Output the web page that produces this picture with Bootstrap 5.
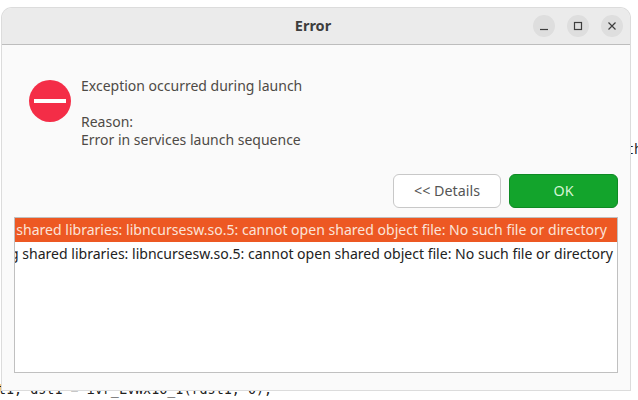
<!DOCTYPE html>
<html lang="en">
<head>
    <meta charset="UTF-8" />
    <title>Error</title>
    <link href="https://cdn.jsdelivr.net/npm/bootstrap@5.3.3/dist/css/bootstrap.min.css" rel="stylesheet">
    <style>
        body { background: #fff; font-family: "Noto Sans", "Liberation Sans", sans-serif; overflow: hidden; }
        .term-text { position: absolute; left: 0; top: 0; width: 638px; height: 400px; margin: 0; overflow: hidden; font: 13.4px/18px "DejaVu Sans Mono", monospace; color: #222; }
        .term-line { position: absolute; white-space: nowrap; }
        .term-bottom { left: -2px; top: 381px; }
        .term-right { left: 626px; top: 141px; }
        .term-left { left: -6px; color: #a85a10; }
        .err-window { position: absolute; left: 2px; top: 8px; width: 628px; height: 382px; background: #fafafa; border-radius: 10px 10px 0 0; box-shadow: 0 0 0 1px #dcdcdc; }
        .err-title { height: 37px; background: #ebebeb; border-bottom: 1px solid #bdbdbd; border-radius: 10px 10px 0 0; padding-right: 7px; }
        .err-title-text { font-size: 14.5px; font-weight: 700; color: #3d3d3d; left: 0; right: 6px; top: 7px; position: absolute; text-align: center; line-height: 20px; }
        .win-btn { width: 22px; height: 22px; border-radius: 50%; background: #dedede; }
        .win-btns { gap: 12px; position: relative; }
        .err-message { padding: 32px 0 0 27px; gap: 10px; height: 129px; }
        .stop-icon { margin-top: 3px; flex: none; }
        .err-text { font-size: 14px; line-height: 18px; color: #4e4a46; }
        .err-actions { gap: 8px; padding-right: 12px; height: 34px; }
        .act-btn { width: 108px; height: 34px; font-size: 14.3px; padding: 0; border-radius: 6px; }
        .act-details { background: #fff; border: 1px solid #c8c8c8; color: #555; }
        .act-ok { width: 109px; background: #13a42c; border: 1px solid #0e8a24; color: #d6f5d6; }
        .log-list { margin: 9px 12px 0 12px; height: 156px; background: #fff; border: 1px solid #c0c0c0; font-size: 14.05px; overflow: hidden; }
        .log-row { height: 24px; line-height: 24px; white-space: nowrap; overflow: hidden; color: #222; }
        .log-sel { background: #ed5823; color: #fbe3d8; padding-right: 10px; }
        .log-plain { padding-right: 4px; }
    </style>
</head>
<body>
    <pre class="term-text"><span class="term-line term-left" style="top:20px">::</span><span class="term-line term-left" style="top:38px">::</span><span class="term-line term-left" style="top:76px">::</span><span class="term-line term-bottom">t1, dst1 = ivr_LvWx16_1(rdst1, 0);</span><span class="term-line term-right">th</span></pre>

    <div class="err-window d-flex flex-column">
        <div class="err-title d-flex align-items-center justify-content-end position-relative">
            <div class="err-title-text">Error</div>
            <div class="win-btns d-flex">
                <div class="win-btn d-flex align-items-center justify-content-center">
                    <svg width="12" height="12" viewBox="0 0 12 12"><path d="M2 9.5h8" stroke="#3d3d3d" stroke-width="1.2"/></svg>
                </div>
                <div class="win-btn d-flex align-items-center justify-content-center">
                    <svg width="12" height="12" viewBox="0 0 12 12"><rect x="2.5" y="2.5" width="7" height="7" fill="none" stroke="#3d3d3d" stroke-width="1.2"/></svg>
                </div>
                <div class="win-btn d-flex align-items-center justify-content-center">
                    <svg width="12" height="12" viewBox="0 0 12 12"><path d="M2.5 2.5l7 7M9.5 2.5l-7 7" stroke="#3d3d3d" stroke-width="1.2"/></svg>
                </div>
            </div>
        </div>

        <div class="err-message d-flex">
            <svg class="stop-icon" width="42" height="42" viewBox="0 0 42 42">
                <circle cx="21" cy="21" r="21" fill="#f42d47"/>
                <rect x="5" y="19" width="32" height="4" fill="#fff"/>
            </svg>
            <div class="err-text">
                Exception occurred during launch<br><br>
                Reason:<br>
                Error in services launch sequence
            </div>
        </div>

        <div class="err-actions d-flex justify-content-end">
            <button type="button" class="btn act-btn act-details">&lt;&lt; Details</button>
            <button type="button" class="btn act-btn act-ok">OK</button>
        </div>

        <div class="log-list">
            <div class="log-row log-sel d-flex justify-content-end">shared libraries: libncursesw.so.5: cannot open shared object file: No such file or directory</div>
            <div class="log-row log-plain d-flex justify-content-end">g shared libraries: libncursesw.so.5: cannot open shared object file: No such file or directory</div>
        </div>
    </div>

    <script src="https://cdn.jsdelivr.net/npm/bootstrap@5.3.3/dist/js/bootstrap.bundle.min.js"></script>
</body>
</html>
